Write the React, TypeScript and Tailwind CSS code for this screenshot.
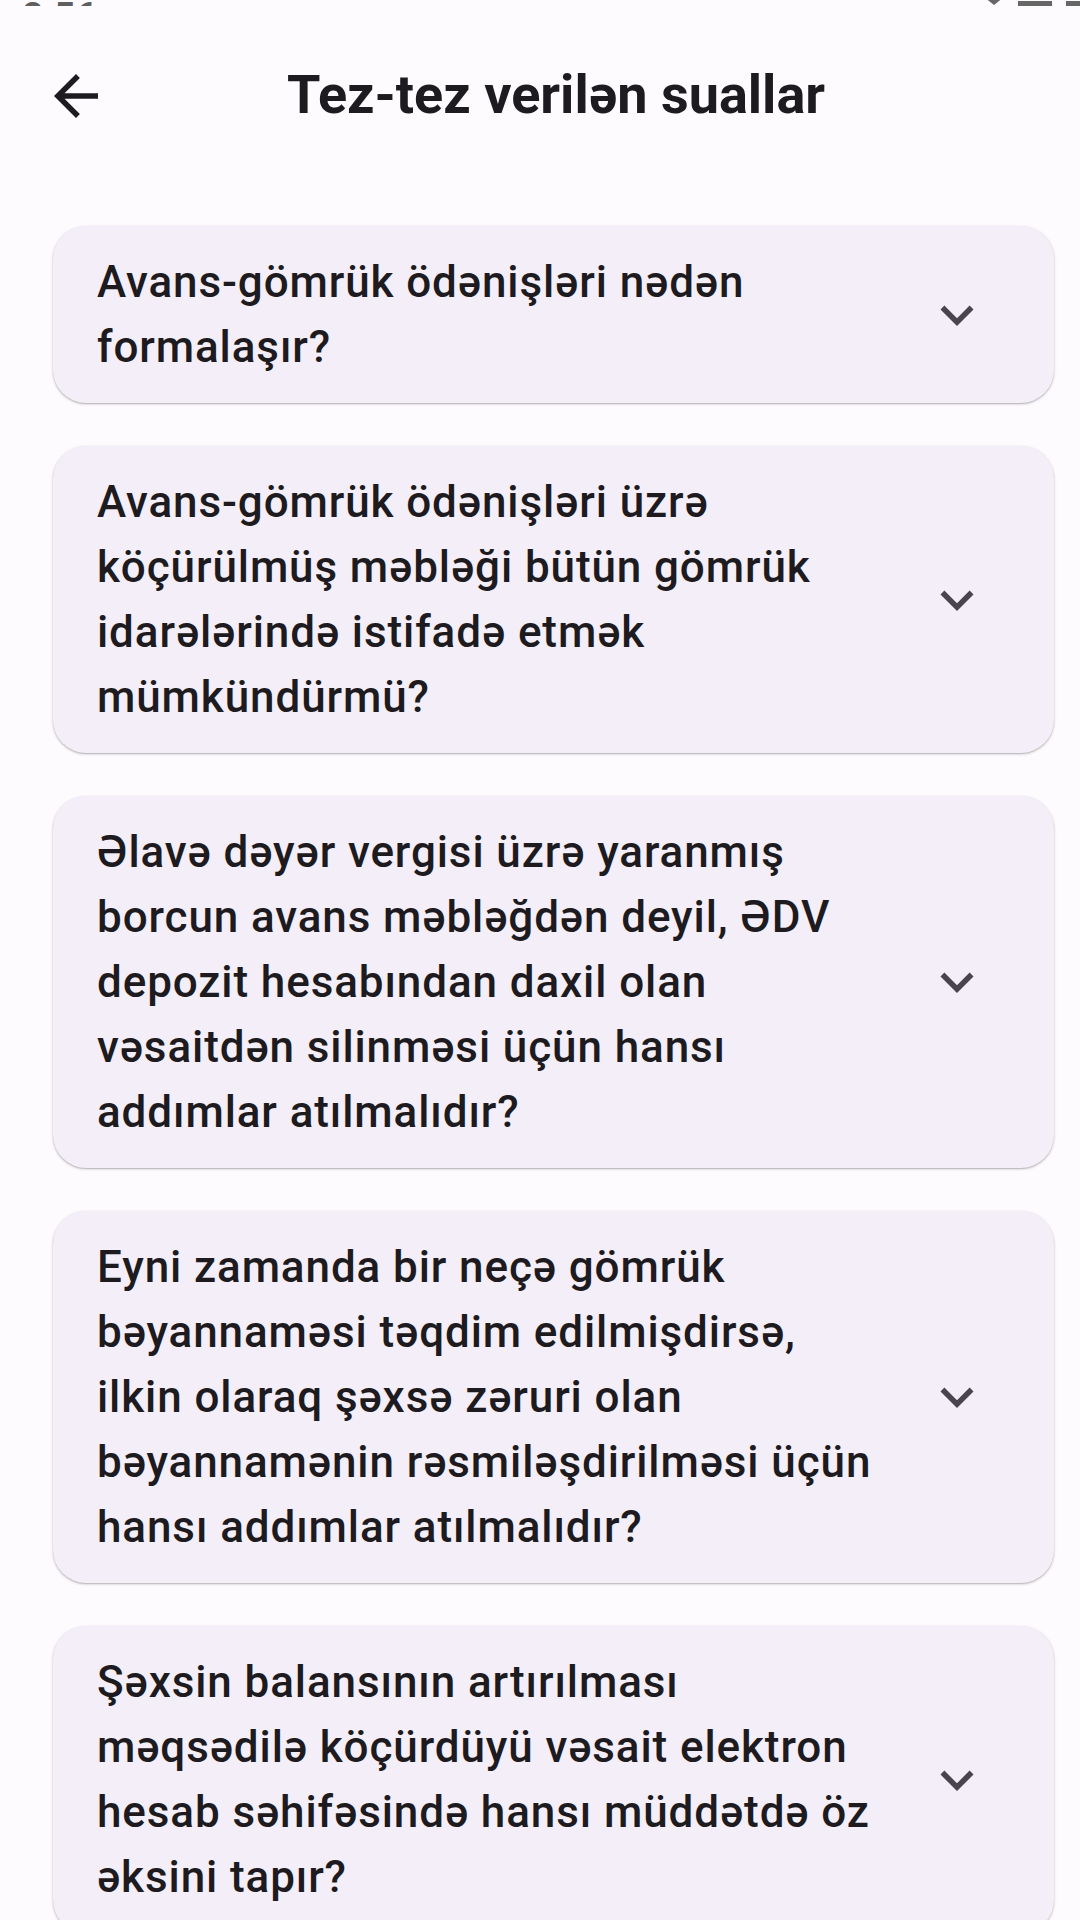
import React from "react";

const faqs: string[][] = [
  ["Avans-gömrük ödənişləri nədən", "formalaşır?"],
  [
    "Avans-gömrük ödənişləri üzrə",
    "köçürülmüş məbləği bütün gömrük",
    "idarələrində istifadə etmək",
    "mümkündürmü?",
  ],
  [
    "Əlavə dəyər vergisi üzrə yaranmış",
    "borcun avans məbləğdən deyil, ƏDV",
    "depozit hesabından daxil olan",
    "vəsaitdən silinməsi üçün hansı",
    "addımlar atılmalıdır?",
  ],
  [
    "Eyni zamanda bir neçə gömrük",
    "bəyannaməsi təqdim edilmişdirsə,",
    "ilkin olaraq şəxsə zəruri olan",
    "bəyannamənin rəsmiləşdirilməsi üçün",
    "hansı addımlar atılmalıdır?",
  ],
  [
    "Şəxsin balansının artırılması",
    "məqsədilə köçürdüyü vəsait elektron",
    "hesab səhifəsində hansı müddətdə öz",
    "əksini tapır?",
  ],
];

function Chevron() {
  return (
    <svg width="66" height="66" viewBox="0 0 24 24" className="shrink-0">
      <path d="M16.59 8.59L12 13.17 7.41 8.59 6 10l6 6 6-6z" fill="#49454F" />
    </svg>
  );
}

function BackArrow() {
  return (
    <svg width="66" height="66" viewBox="0 0 24 24" className="shrink-0">
      <path
        d="M20 11H7.83l5.59-5.59L12 4l-8 8 8 8 1.41-1.41L7.83 13H20v-2z"
        fill="#1D1B20"
      />
    </svg>
  );
}

export default function App() {
  return (
    <div
      className="w-[1080px] h-[1920px] overflow-hidden bg-[#FEFBFF] text-[#1D1B20]"
      style={{ fontFamily: "Roboto, 'Noto Sans', sans-serif" }}
    >
      {/* clipped status bar */}
      <div className="h-[6px] overflow-hidden flex items-end justify-between">
        <div className="ml-[22px] mb-[-30px] text-[38px] leading-[38px] font-medium text-[#5f5f5f]">
          2:56
        </div>
        <div className="flex items-end gap-[14px] mr-0">
          <div className="w-0 h-0 border-l-[10px] border-r-[10px] border-t-[8px] border-l-transparent border-r-transparent border-t-[#666] mb-[1px]" />
          <div className="w-[34px] h-[5px] bg-[#666]" />
          <div className="w-[14px] h-[5px] bg-[#666]" />
        </div>
      </div>

      {/* header */}
      <div className="h-[179px] flex items-center">
        <div className="ml-[43px]">
          <BackArrow />
        </div>
        <div className="w-[894px] text-center text-[54px] leading-[66px] font-bold mt-[-2px]">
          Tez-tez verilən suallar
        </div>
      </div>

      {/* list */}
      <div className="flex flex-col gap-[43px] pt-[41px]">
        {faqs.map((lines, i) => (
          <div
            key={i}
            className="ml-[53px] w-[1001px] rounded-[33px] bg-[#F3EEF7] shadow-[0_1px_3px_rgba(0,0,0,0.22),0_1px_1px_rgba(0,0,0,0.12)] flex items-center pl-[44px] pr-[64px] py-[23.5px]"
          >
            <div className="flex-1 text-[44px] leading-[65px] font-medium tracking-[0.9px]">
              {lines.map((l, j) => (
                <div key={j} className="whitespace-nowrap">
                  {l}
                </div>
              ))}
            </div>
            <Chevron />
          </div>
        ))}
      </div>
    </div>
  );
}
